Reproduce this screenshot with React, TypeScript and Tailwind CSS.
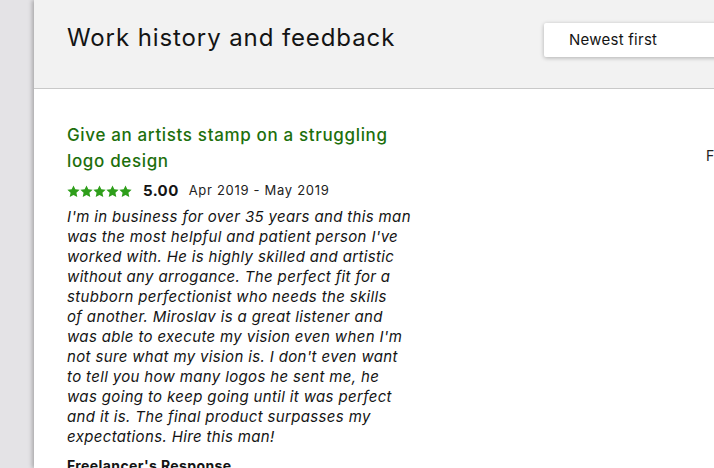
import React from "react";

const Star = () => (
  <svg width="13" height="13" viewBox="0 0 24 24" className="shrink-0">
    <path
      d="M12 0.8l3.4 7.2 7.9.9-5.9 5.4 1.6 7.9L12 18.3l-7 3.9 1.6-7.9L0.7 8.9l7.9-.9z"
      fill="#2e9e1a"
    />
  </svg>
);

const lines = [
  "I'm in business for over 35 years and this man",
  "was the most helpful and patient person I've",
  "worked with. He is highly skilled and artistic",
  "without any arrogance. The perfect fit for a",
  "stubborn perfectionist who needs the skills",
  "of another. Miroslav is a great listener and",
  "was able to execute my vision even when I'm",
  "not sure what my vision is. I don't even want",
  "to tell you how many logos he sent me, he",
  "was going to keep going until it was perfect",
  "and it is. The final product surpasses my",
  "expectations. Hire this man!",
];

export default function App() {
  return (
    <div
      className="flex w-[714px] h-[468px] overflow-hidden bg-[#e4e3e6] text-[#1a1a1a]"
      style={{ fontFamily: "Inter, 'Open Sans', sans-serif" }}
    >
      <div className="w-[34px] shrink-0" />
      <div className="flex-1 flex flex-col bg-white shadow-[-2px_0_4px_rgba(0,0,0,0.25)] min-w-0">
        <div className="h-[89px] shrink-0 bg-[#f2f2f2] border-b border-[#c9c9c9] flex items-start pl-[33px] pt-[22px] relative">
          <h1 className="text-[24px] leading-[32px] font-normal tracking-[0.9px] text-[#141414]">
            Work history and feedback
          </h1>
          <div className="absolute left-[510px] top-[23px] w-[200px] h-[34px] bg-white shadow-[0_1px_4px_rgba(0,0,0,0.28)] rounded-l-[2px] flex items-center pl-[25px] text-[15px] tracking-[0.25px] text-[#141414]">
            Newest first
          </div>
        </div>
        <div className="flex pl-[33px] pt-[33px]">
          <div className="w-[345px] shrink-0">
            <div className="text-[17px] leading-[26px] font-medium tracking-[0.65px] text-[#1d6f0c]">
              Give an artists stamp on a struggling
              <br />
              logo design
            </div>
            <div className="flex items-center mt-[6px] h-[22px]">
              <div className="flex gap-[0px]">
                <Star />
                <Star />
                <Star />
                <Star />
                <Star />
              </div>
              <span className="ml-[11px] text-[15px] font-bold tracking-[0.4px] text-[#141414]">5.00</span>
              <span className="ml-[10px] text-[13px] tracking-[0.7px] text-[#222]">Apr 2019 - May 2019</span>
            </div>
            <div className="mt-[5px] text-[15px] leading-[20px] italic tracking-[0.35px] text-[#141414]">
              {lines.map((l, i) => (
                <div key={i} className="whitespace-nowrap">{l}</div>
              ))}
            </div>
            <div className="mt-[8px] text-[14px] font-bold tracking-[0.4px] text-[#141414]">Freelancer's Response</div>
          </div>
          <div className="ml-[294px] pt-[23px] text-[14px] text-[#222]">F</div>
        </div>
      </div>
    </div>
  );
}
